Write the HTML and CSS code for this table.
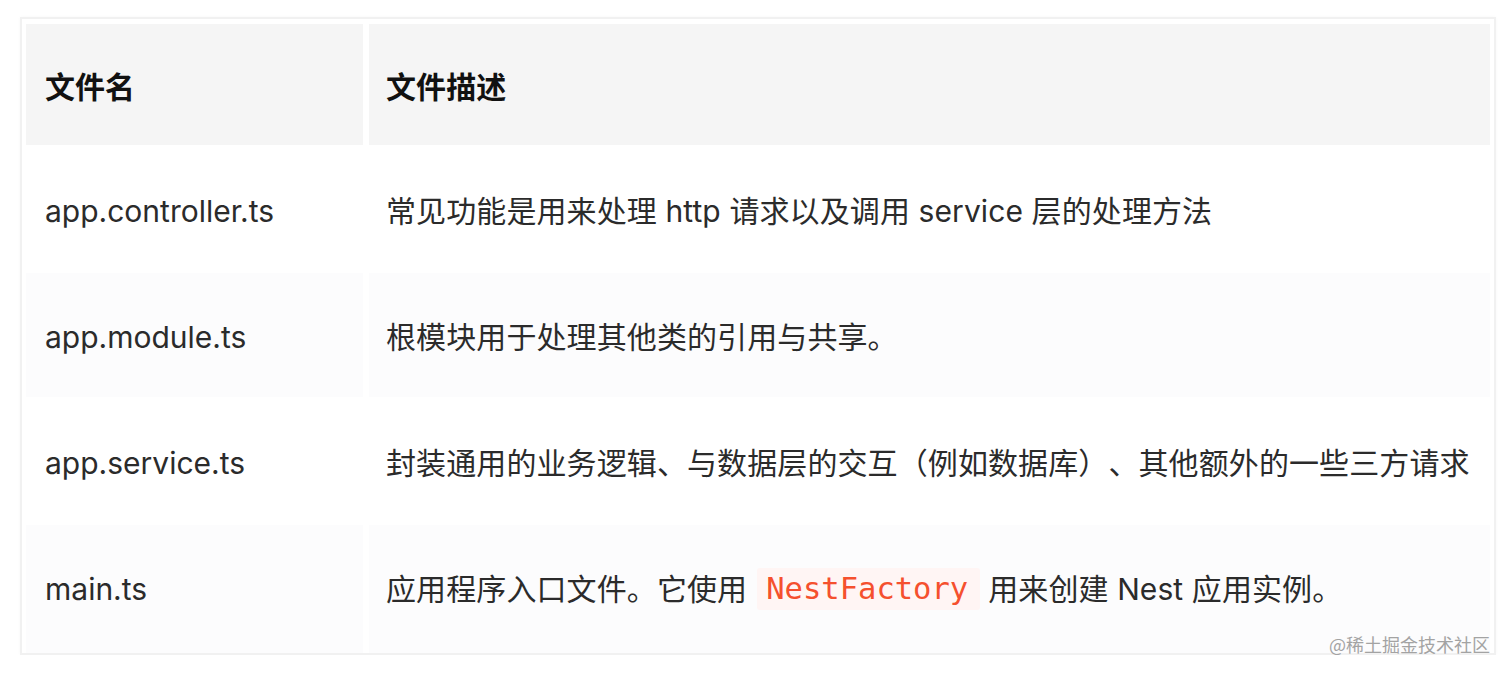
FILE: index.html
```html
<!DOCTYPE html>
<html lang="zh-CN">
<head>
<meta charset="utf-8">
<title>文件说明</title>
<link rel="stylesheet" href="styles.css">
</head>
<body>
<div class="frame">
  <div class="table">
    <div class="cell head">文件名</div>
    <div class="cell head desc">文件描述</div>

    <div class="cell">app.controller.ts</div>
    <div class="cell desc">常见功能是用来处理 http 请求以及调用 service 层的处理方法</div>

    <div class="cell alt">app.module.ts</div>
    <div class="cell alt desc">根模块用于处理其他类的引用与共享。</div>

    <div class="cell">app.service.ts</div>
    <div class="cell desc">封装通用的业务逻辑、与数据层的交互（例如数据库）、其他额外的一些三方请求</div>

    <div class="cell alt last">main.ts</div>
    <div class="cell alt last desc">应用程序入口文件。它使用 <code class="code">NestFactory</code> 用来创建 Nest 应用实例。</div>
  </div>
  <div class="watermark">@稀土掘金技术社区</div>
</div>
</body>
</html>
```

FILE: styles.css
```css
* { box-sizing: border-box; }

html, body {
  margin: 0;
  padding: 0;
  background: #ffffff;
}

body {
  font-family: "Inter", "Noto Sans CJK SC", sans-serif;
  color: #333333;
  text-spacing-trim: space-all;
}

.frame {
  position: relative;
  width: 1476px;
  margin: 17px 0 0 20px;
  border: 2px solid #f1f1f1;
  padding: 5px 4px 0 4px;
  box-shadow: 0 0 3px rgba(0, 0, 0, 0.03);
}

.table {
  display: grid;
  grid-template-columns: 337px 1fr;
  grid-template-rows: 121px 124px 124px 124px 128px;
  column-gap: 6px;
  row-gap: 2px;
}

.cell {
  display: flex;
  align-items: center;
  padding: 4px 0 0 19px;
  font-size: 30px;
  line-height: 40px;
  background: #ffffff;
  color: #2b2b2b;
  white-space: nowrap;
  text-spacing-trim: space-all;
}

.cell.desc {
  padding-left: 17px;
  letter-spacing: 0.1px;
}

.cell.last {
  padding-bottom: 4px;
  padding-top: 4px;
}

.cell.head {
  background: #f5f5f5;
  font-weight: 700;
  color: #111111;
  padding-top: 4px;
}

.cell.alt {
  background: #fcfcfd;
}

.code {
  font-family: "DejaVu Sans Mono", "Liberation Mono", monospace;
  font-size: 30.5px;
  letter-spacing: 0;
  color: #f5502e;
  background: #fff5f4;
  padding: 11px 12px 11px 9px;
  margin: 0 8px 0 10px;
  border-radius: 3px;
  line-height: 20px;
}

.watermark {
  position: absolute;
  right: 4px;
  bottom: -2px;
  font-family: "Noto Sans CJK SC", sans-serif;
  font-size: 18px;
  line-height: 22px;
  color: #a3a3a3;
  text-shadow: 0 0 1px #ffffff;
}
```
